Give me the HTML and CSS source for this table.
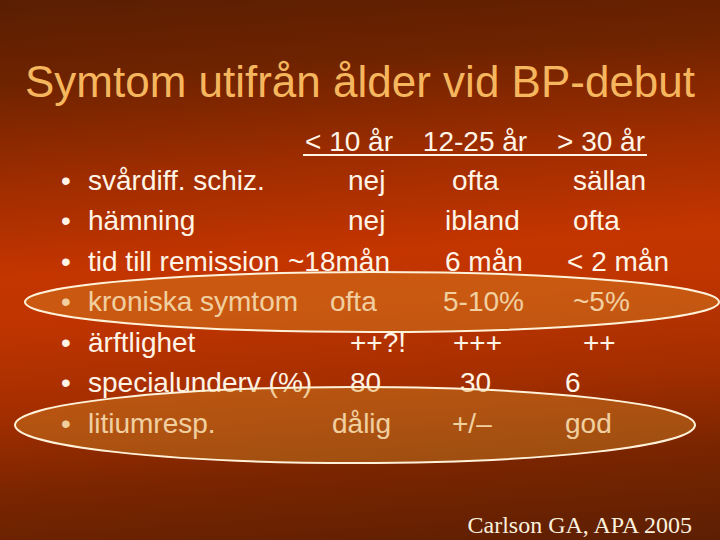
FILE: index.html
```html
<!DOCTYPE html>
<html lang="sv">
<head>
    <meta charset="UTF-8">
    <meta name="viewport" content="width=device-width, initial-scale=1.0">
    <title>Symtom utifrån ålder vid BP-debut</title>
    <link rel="stylesheet" href="styles.css">
</head>
<body>
    <div class="slide">
        <h1 class="title">Symtom utifrån ålder vid BP-debut</h1>

        <div class="head">
            <span>&lt; 10 år</span>
            <span>12-25 år</span>
            <span>&gt; 30 år</span>
        </div>

        <ul class="rows">
            <li class="row">
                <span class="label">svårdiff. schiz.</span>
                <span class="x60">nej</span>
                <span class="x32">ofta</span>
                <span class="x13">sällan</span>
            </li>
            <li class="row">
                <span class="label">hämning</span>
                <span class="x60">nej</span>
                <span class="x25">ibland</span>
                <span class="x13">ofta</span>
            </li>
            <li class="row">
                <span class="label">tid till remission</span>
                <span class="x0">~18mån</span>
                <span class="x25">6 mån</span>
                <span class="x7">&lt; 2 mån</span>
            </li>
            <li class="row">
                <span class="label">kroniska symtom</span>
                <span class="x42">ofta</span>
                <span class="x23">5-10%</span>
                <span class="x13">~5%</span>
            </li>
            <li class="row">
                <span class="label">ärftlighet</span>
                <span class="x62">++?!</span>
                <span class="x33">+++</span>
                <span class="x23">++</span>
            </li>
            <li class="row">
                <span class="label">specialunderv (%)</span>
                <span class="x62">80</span>
                <span class="x40">30</span>
                <span class="x5">6</span>
            </li>
            <li class="row">
                <span class="label">litiumresp.</span>
                <span class="x44">dålig</span>
                <span class="x32">+/–</span>
                <span class="x5">god</span>
            </li>
        </ul>

        <p class="source">Carlson GA, APA 2005</p>

        <!-- highlight rings drawn over the table -->
        <svg class="marks" viewBox="0 0 720 540" width="720" height="540">
            <ellipse cx="372" cy="302" rx="347" ry="30"></ellipse>
            <ellipse cx="355" cy="425" rx="340" ry="38"></ellipse>
        </svg>
    </div>
</body>
</html>
```

FILE: styles.css
```css
body {
    margin: 0;
    background-color: #5c1f03;
}
.slide {
    position: relative;
    width: 720px;
    height: 540px;
    overflow: hidden;
    display: flex;
    flex-direction: column;
    font-family: 'Liberation Sans', Arial, sans-serif;
    color: #fff4e6;
    background: linear-gradient(176deg, #5a1e02 0%, #6e2300 14%, #9c2c00 30%, #c43500 47%, #be3400 56%, #a42e00 70%, #7a2500 84%, #5c1f03 100%);
}
.title {
    margin: 0;
    padding-top: 56px;
    font-size: 44px;
    font-weight: normal;
    line-height: 1.2;
    text-align: center;
    color: #f6b65e;
}
.head {
    display: flex;
    justify-content: space-between;
    width: 340px;
    margin: 20px 0 0 303px;
    padding: 0 2px;
    font-size: 28px;
    line-height: 25px;
    border-bottom: 2px solid #fff4e6;
}
.rows {
    list-style: none;
    margin: 5px 0 0;
    padding: 0;
}
.row {
    display: grid;
    grid-template-columns: 30px 200px 132px 140px 1fr;
    padding-left: 58px;
    font-size: 28px;
    line-height: 40.5px;
    white-space: nowrap;
}
.row::before {
    content: "\2022";
    padding-left: 3px;
}
.x0 { padding-left: 0; }
.x5 { padding-left: 5px; }
.x7 { padding-left: 7px; }
.x13 { padding-left: 13px; }
.x23 { padding-left: 23px; }
.x25 { padding-left: 25px; }
.x32 { padding-left: 32px; }
.x33 { padding-left: 33px; }
.x40 { padding-left: 40px; }
.x42 { padding-left: 42px; }
.x44 { padding-left: 44px; }
.x60 { padding-left: 60px; }
.x62 { padding-left: 62px; }
.source {
    margin: auto 0 0;
    padding: 0 28px 3px 0;
    text-align: right;
    font-family: 'Liberation Serif', 'Times New Roman', serif;
    font-size: 24px;
    line-height: 24px;
    color: #faf0de;
}
.marks {
    position: absolute;
    top: 0;
    left: 0;
    pointer-events: none;
}
.marks ellipse {
    fill: rgba(218, 148, 45, 0.38);
    stroke: #fff2d8;
    stroke-width: 2;
}
```
